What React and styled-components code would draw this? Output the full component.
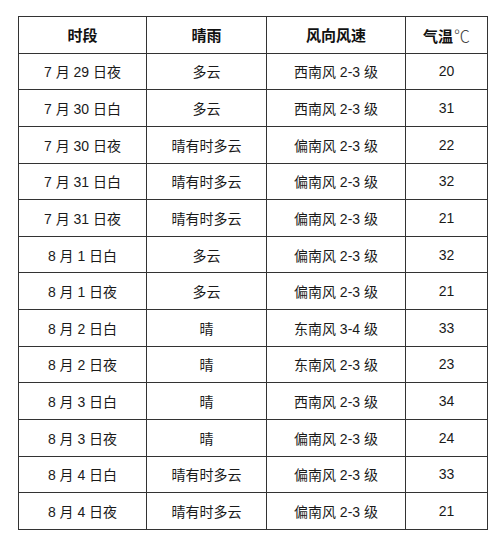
import React from "react";
import styled, { createGlobalStyle } from "styled-components";

const Global = createGlobalStyle`
  html, body { margin: 0; padding: 0; background: #fff; }
  body { font-family: "Liberation Sans", "Noto Sans CJK SC", Arial, sans-serif; color: #111; }
`;

const Page = styled.div`
  padding: 16px 0 0 18px;
`;

const Table = styled.table`
  border-collapse: collapse;
  table-layout: fixed;
  width: 469px;
`;

const Col = styled.col`
  width: ${(p) => p.$w}px;
`;

const Row = styled.tr`
  height: 36.64px;
`;

const Cell = styled.td`
  border: 1px solid #333;
  text-align: center;
  vertical-align: middle;
  font-size: 14px;
  padding: 0;
  white-space: nowrap;
  color: #1a1a1a;
`;

const HeadCell = styled.th`
  border: 1px solid #333;
  text-align: center;
  vertical-align: middle;
  font-size: 15px;
  font-weight: bold;
  padding: 0;
  color: #111;
`;

const Unit = styled.span`
  font-family: "Noto Sans CJK SC", "DejaVu Serif", serif;
  font-weight: 300;
  font-size: 16px;
  color: #444;
  margin-left: 1px;
`;

const rows = [
  ["7 月 29 日夜", "多云", "西南风 2-3 级", "20"],
  ["7 月 30 日白", "多云", "西南风 2-3 级", "31"],
  ["7 月 30 日夜", "晴有时多云", "偏南风 2-3 级", "22"],
  ["7 月 31 日白", "晴有时多云", "偏南风 2-3 级", "32"],
  ["7 月 31 日夜", "晴有时多云", "偏南风 2-3 级", "21"],
  ["8 月 1 日白", "多云", "偏南风 2-3 级", "32"],
  ["8 月 1 日夜", "多云", "偏南风 2-3 级", "21"],
  ["8 月 2 日白", "晴", "东南风 3-4 级", "33"],
  ["8 月 2 日夜", "晴", "东南风 2-3 级", "23"],
  ["8 月 3 日白", "晴", "西南风 2-3 级", "34"],
  ["8 月 3 日夜", "晴", "偏南风 2-3 级", "24"],
  ["8 月 4 日白", "晴有时多云", "偏南风 2-3 级", "33"],
  ["8 月 4 日夜", "晴有时多云", "偏南风 2-3 级", "21"],
];

export default function App() {
  return (
    <Page>
      <Global />
      <Table>
        <colgroup>
          <Col $w={128} />
          <Col $w={120} />
          <Col $w={139} />
          <Col $w={82} />
        </colgroup>
        <thead>
          <Row>
            <HeadCell>时段</HeadCell>
            <HeadCell>晴雨</HeadCell>
            <HeadCell>风向风速</HeadCell>
            <HeadCell>
              气温<Unit>℃</Unit>
            </HeadCell>
          </Row>
        </thead>
        <tbody>
          {rows.map((r, i) => (
            <Row key={i}>
              {r.map((c, j) => (
                <Cell key={j}>{c}</Cell>
              ))}
            </Row>
          ))}
        </tbody>
      </Table>
    </Page>
  );
}
